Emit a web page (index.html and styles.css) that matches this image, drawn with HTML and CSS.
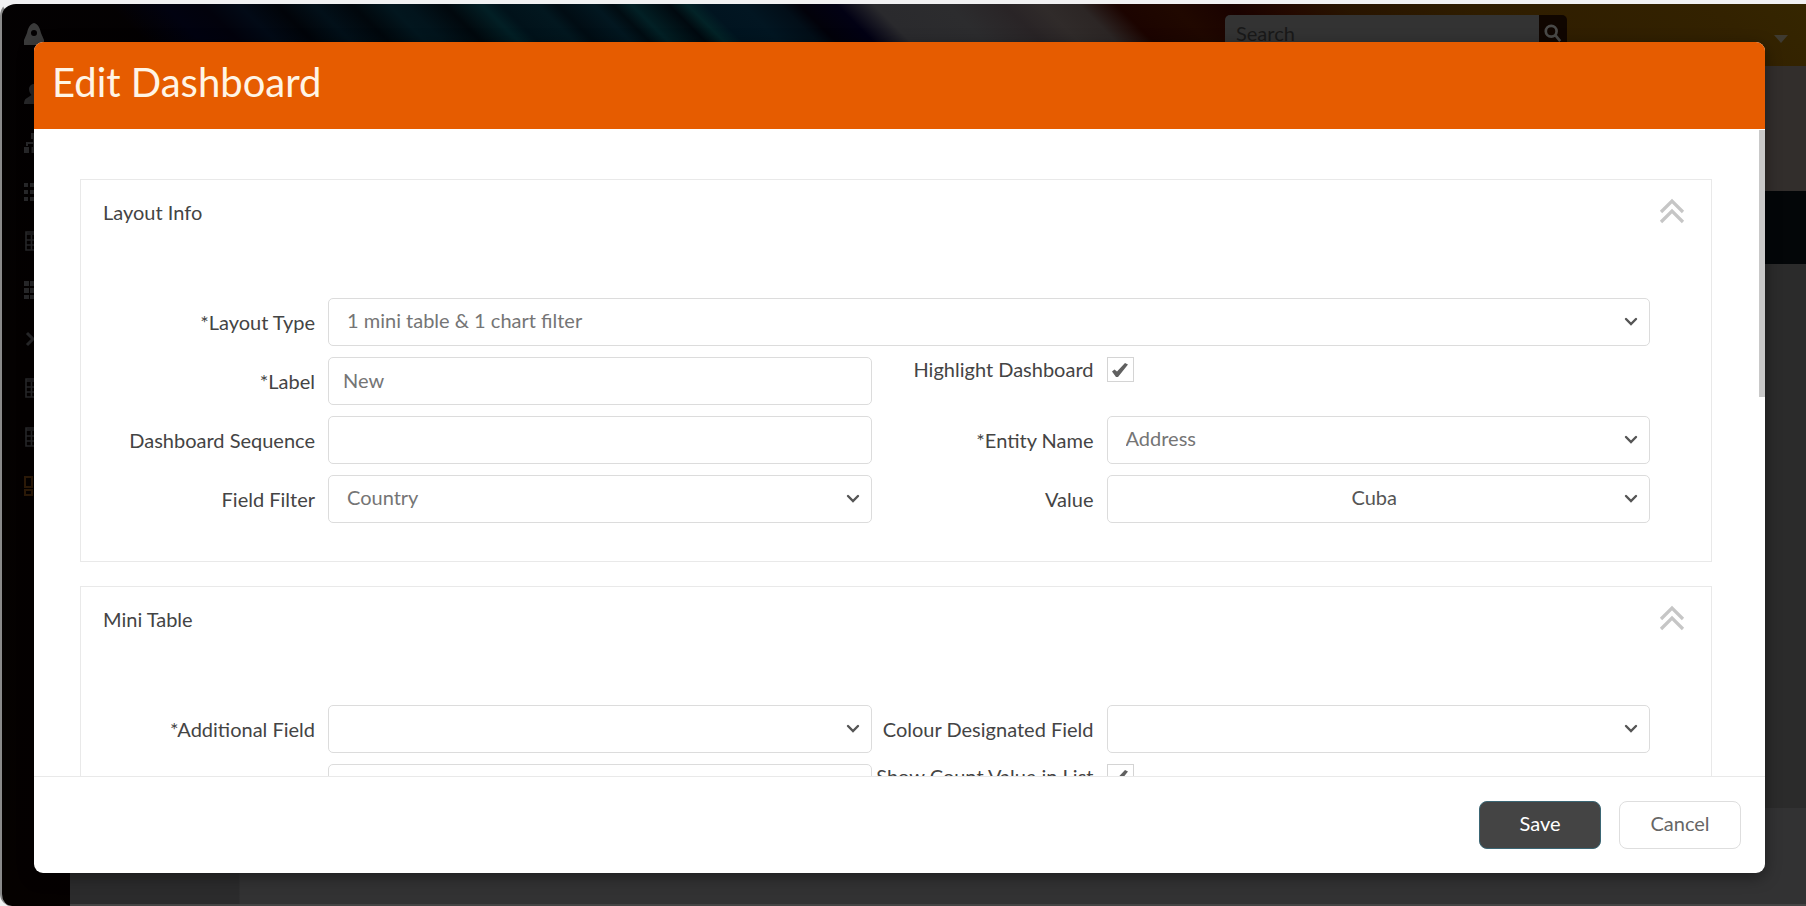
FILE: index.html
```html
<!DOCTYPE html>
<html lang="en">
<head>
<meta charset="utf-8">
<title>Edit Dashboard</title>
<link rel="stylesheet" href="styles.css">
</head>
<body>
<svg class="sprite" aria-hidden="true">
  <symbol id="i-down" viewBox="0 0 14 10"><path d="M2 2l5 5 5-5" fill="none" stroke="currentColor" stroke-width="2.4" stroke-linecap="round"/></symbol>
  <symbol id="i-check" viewBox="0 0 16 14"><path d="M0 8.500L2.500 6.500 5 8.500 13 0l3 1.500L6 14H4z" fill="currentColor"/></symbol>
  <symbol id="i-up2" viewBox="0 0 26 26"><path d="M2 14L13 3l11 11M2 24l11-11 11 11" fill="none" stroke="currentColor" stroke-width="3.2"/></symbol>
  <symbol id="i-table" viewBox="0 0 20 20"><path d="M2 1h16v18H2zM2 3h16M2 9h16M2 14h16M7.500 4v15M12.500 4v15" fill="none" stroke="currentColor" stroke-width="1.600"/></symbol>
</svg>
<div class="app">
  <aside class="sidebar">
    <a class="brand" href="#" aria-label="Home"><svg viewBox="0 0 20 22"><path fill-rule="evenodd" d="M10 0C6 1 4 5 3 10l-3 7v5h20v-5l-3-7C16 5 14 1 10 0zm0 7a3 3 0 100 6 3 3 0 000-6z" fill="currentColor"/></svg></a>
    <nav class="menu" aria-label="Main">
      <a href="#" aria-label="Users"><svg viewBox="0 0 20 20"><path d="M10 0a5 5 0 015 5c0 3-1.500 5-2.500 6l6 4c1 1 1.500 3 1.500 5H0c0-2 .5-4 1.500-5l6-4C6.500 10 5 8 5 5a5 5 0 015-5z" fill="currentColor"/></svg></a>
      <a href="#" aria-label="Hierarchy"><svg viewBox="0 0 20 20"><path d="M7 0h6v6H7zM0 14h5v6H0zM7.500 14h5v6h-5zM15 14h5v6h-5zM9 6h2v8H9zM2 9h16v4h-2v-2H4v2H2z" fill="currentColor"/></svg></a>
      <a href="#" aria-label="List"><svg viewBox="0 0 20 20"><path d="M0 1h4v4H0zM6 1h4v4H6zM12 1h8v4h-8zM0 8h4v4H0zM6 8h4v4H6zM12 8h8v4h-8zM0 15h4v4H0zM6 15h4v4H6zM12 15h8v4h-8z" fill="currentColor"/></svg></a>
      <a href="#" aria-label="Records"><svg><use href="#i-table"/></svg></a>
      <a href="#" aria-label="Grid"><svg viewBox="0 0 20 20"><path d="M0 1h5v5H0zM6 1h6v5H6zM13 1h6v5h-6zM0 8h5v5H0zM6 8h6v5H6zM13 8h6v5h-6zM0 15h5v4H0zM6 15h6v4H6zM13 15h6v4h-6z" fill="currentColor"/></svg></a>
      <a href="#" aria-label="Expand"><svg viewBox="0 0 20 20"><path d="M3 4l6 6-6 6M17 4l-6 6 6 6" fill="none" stroke="currentColor" stroke-width="3"/></svg></a>
      <a href="#" aria-label="Sheets"><svg><use href="#i-table"/></svg></a>
      <a href="#" aria-label="Reports"><svg><use href="#i-table"/></svg></a>
      <a class="active" href="#" aria-label="Dashboards"><svg viewBox="0 0 20 20"><path d="M1 1h7v10H1zM12 1h7v5h-7zM1 14h7v5H1zM12 9h7v10h-7z" fill="none" stroke="currentColor" stroke-width="2"/></svg></a>
    </nav>
  </aside>
  <div class="main">
    <header class="topbar">
      <div class="search">
        <input type="search" placeholder="Search" aria-label="Search">
        <button type="button" aria-label="Find"><svg viewBox="0 0 20 20"><path d="M13 13l5 6M14 8A6 6 0 112 8a6 6 0 0112 0z" fill="none" stroke="currentColor" stroke-width="3"/></svg></button>
      </div>
      <button class="account" type="button" aria-label="Account"><svg viewBox="0 0 14 8"><path d="M0 0h14L7 8z" fill="currentColor"/></svg></button>
    </header>
    <div class="band-title"></div>
    <div class="band-tabs"></div>
    <div class="band-page"></div>
    <div class="band-foot"></div>
  </div>
</div>

<div class="overlay">
  <form class="modal" role="dialog" aria-labelledby="dlg-title">
    <header class="modal-head"><h1 id="dlg-title">Edit Dashboard</h1></header>
    <div class="modal-body">
      <section class="card">
        <div class="card-head">
          <h2>Layout Info</h2>
          <button type="button" aria-label="Collapse Layout Info"><svg><use href="#i-up2"/></svg></button>
        </div>
        <div class="fields">
          <label for="layout">*Layout Type</label>
          <div class="pick wide"><select id="layout"><option>1 mini table &amp; 1 chart filter</option></select><svg><use href="#i-down"/></svg></div>
          <label for="label">*Label</label>
          <input class="text" id="label" type="text" value="New">
          <label class="top" for="highlight">Highlight Dashboard</label>
          <div class="tick"><input id="highlight" type="checkbox" checked><svg><use href="#i-check"/></svg></div>
          <label for="sequence">Dashboard Sequence</label>
          <input class="text" id="sequence" type="text">
          <label for="entity">*Entity Name</label>
          <div class="pick"><select id="entity"><option>Address</option></select><svg><use href="#i-down"/></svg></div>
          <label for="filter">Field Filter</label>
          <div class="pick"><select id="filter"><option>Country</option></select><svg><use href="#i-down"/></svg></div>
          <label for="value">Value</label>
          <div class="pick centered"><select id="value"><option>Cuba</option></select><svg><use href="#i-down"/></svg></div>
        </div>
      </section>
      <section class="card">
        <div class="card-head">
          <h2>Mini Table</h2>
          <button type="button" aria-label="Collapse Mini Table"><svg><use href="#i-up2"/></svg></button>
        </div>
        <div class="fields">
          <label for="additional">*Additional Field</label>
          <div class="pick"><select id="additional"><option></option></select><svg><use href="#i-down"/></svg></div>
          <label for="colour">Colour Designated Field</label>
          <div class="pick"><select id="colour"><option></option></select><svg><use href="#i-down"/></svg></div>
          <input class="text second" type="text" aria-label="Additional value">
          <label class="top" for="count">Show Count Value in List</label>
          <div class="tick"><input id="count" type="checkbox" checked><svg><use href="#i-check"/></svg></div>
        </div>
      </section>
    </div>
    <div class="thumb"></div>
    <footer class="modal-foot">
      <button class="save" type="submit">Save</button>
      <button class="cancel" type="button">Cancel</button>
    </footer>
  </form>
</div>
</body>
</html>
```
FILE: styles.css
```css
* { box-sizing: border-box; }

body {
  margin: 0;
  height: 100vh;
  overflow: hidden;
  background: #f1f1f2;
  color: #444;
  font: 20px/24px Lato, "Open Sans", sans-serif;
}

h1, h2 { margin: 0; font-weight: 400; }
button, input, select { font: inherit; }
svg { display: block; }
.sprite { position: absolute; width: 0; height: 0; }

/* Dimmed application behind the dialog */
.app {
  display: flex;
  height: 100vh;
  border: solid #8a8a8a;
  border-width: 0 0 0 2px;
  border-top: 4px solid #f1f1f2;
  border-radius: 16px 0 0 12px;
  background: linear-gradient(45deg, #050100 0%, #020103 60%, #04020a 100%);
}
.sidebar { flex: none; width: 68px; padding-top: 19px; color: #29292b; }
.sidebar a { display: flex; align-items: center; padding-left: 22px; color: inherit; }
.sidebar svg { width: 20px; height: 20px; }
.sidebar .brand { height: 46px; align-items: flex-start; color: #3a3a3a; }
.sidebar .brand svg { height: 22px; }
.sidebar .menu a { height: 49px; }
.sidebar .menu .active { color: #2e1b08; }

.main { flex: 1; display: flex; flex-direction: column; }
.topbar {
  flex: none;
  display: flex;
  align-items: flex-start;
  justify-content: flex-end;
  height: 62px;
  margin-left: -68px;
  padding: 11px 18px 0 0;
  pointer-events: none;
  background: linear-gradient(45deg,
    transparent 0%, transparent 9%, #010210 12%, #02020c 14%, #020a16 16%, #010409 18%,
    #021019 20%, #01070c 22%, #02161e 24%, #02141c 25%, #01080d 27%, #021f25 29%, #01121a 30%,
    #02171f 32%, #010c13 33%, #021720 35%, #010c12 36%, #022025 37%, #01090f 39%, #022327 40%,
    #011420 41%, #021622 43%, #020e18 45%, #02020a 46%, #020114 48%, #2a2a2d 50%, #2c2c2e 54%,
    #292426 57%, #302b2a 59%, #2c2625 61%, #1c0400 63%, #200800 66%, #1a0200 69%, #240900 72%,
    #281400 75%, #2f1d00 82%, #332200 95%, #352600 100%);
}
.search { display: flex; height: 36px; margin-right: 207px; }
.search input {
  width: 314px;
  border: 0;
  border-radius: 5px 0 0 5px;
  padding: 0 11px;
  background: #333;
  color: #151515;
}
.search input::placeholder { color: #191919; }
.search button { width: 28px; padding: 8px 5px; border: 0; border-radius: 0 5px 5px 0; background: #100600; color: #4a4a48; }
.search svg { width: 18px; height: 20px; }
.account { padding: 20px 0 0; border: 0; background: none; color: #3e3a30; }
.account svg { width: 14px; height: 8px; }
.band-title { flex: none; height: 125px; background: #322e2c; }
.band-tabs { flex: none; height: 73px; background: #030608; }
.band-page { flex: 1; background: #2b2b2b; }
.band-foot { flex: none; height: 98px; border-bottom: 2px solid #444; background: linear-gradient(90deg, #2b2b2c 169px, #323233 170px); }

/* Dialog */
.overlay { position: absolute; inset: 42px 41px 33px 34px; display: flex; }
.modal {
  position: relative;
  flex: 1;
  display: flex;
  flex-direction: column;
  overflow: hidden;
  border-radius: 9px;
  background: #fff;
  box-shadow: 0 4px 16px rgba(0, 0, 0, .4);
}
.modal-head { flex: none; padding: 18px 18px 25px; background: #e65c00; color: #fff5e6; }
.modal-head h1 { font-size: 40px; line-height: 44px; }
.modal-body { flex: 1; min-height: 0; overflow: auto; scrollbar-width: none; padding: 50px 53px 50px 46px; }
.thumb { position: absolute; top: 88px; right: 0; width: 6px; height: 267px; background: #c9c9c9; }

.card { margin-bottom: 24px; padding-bottom: 38px; border: 1px solid #e9e9e9; }
.card-head { display: flex; justify-content: space-between; padding: 18px 26px 0 22px; }
.card-head h2 { padding-top: 2px; font-size: 20px; line-height: 24px; }
.card-head button { padding: 0; border: 0; background: none; color: #c6c6c6; }
.card-head svg { width: 26px; height: 26px; }

.fields {
  display: grid;
  grid-template-columns: 235px 1fr 235px 1fr;
  gap: 11px 0;
  padding: 74px 61px 0 12px;
}
.fields label { padding: 12px 13px 0 0; text-align: right; white-space: nowrap; }
.fields label.top { padding-top: 0; }
.wide { grid-column: 2 / -1; }
.second { grid-column: 2; }
.text, .pick select {
  width: 100%;
  height: 48px;
  border: 1px solid #dcdcdc;
  border-radius: 5px;
  background: #fff;
  color: #757575;
}
.text { padding: 0 14px 2px; }
.pick { display: grid; align-items: center; }
.pick > * { grid-area: 1 / 1; }
.pick select { appearance: none; padding: 0 40px 4px 18px; }
.pick svg { width: 14px; height: 10px; margin-right: 12px; justify-self: end; color: #555; pointer-events: none; }
.centered select { padding-left: 32px; text-align-last: center; color: #555; }
.tick { display: grid; width: 27px; height: 25px; place-items: center; }
.tick > * { grid-area: 1 / 1; }
.tick input { appearance: none; width: 27px; height: 25px; margin: 0; border: 1px solid #d4d4d4; background: #fff; }
.tick svg { width: 16px; height: 14px; color: #606060; pointer-events: none; }

.modal-foot { flex: none; display: flex; justify-content: flex-end; gap: 18px; padding: 24px; border-top: 1px solid #e9e9e9; }
.modal-foot button { width: 122px; height: 48px; padding: 0 0 4px; border: 1px solid #dedede; border-radius: 8px; background: #fff; color: #666; }
.modal-foot .save { border-color: #3b6674; background: #444; color: #fff; }
```
